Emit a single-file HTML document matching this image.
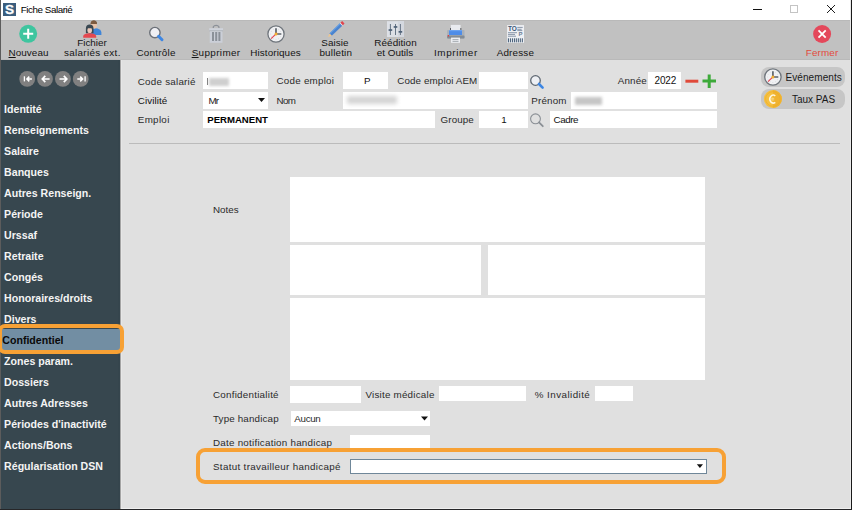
<!DOCTYPE html>
<html><head><meta charset="utf-8"><style>
html,body{margin:0;padding:0;width:852px;height:510px;overflow:hidden;background:#e0e0e0;}
body{position:relative;font-family:"Liberation Sans", sans-serif;}
body>div,body>svg{position:absolute;box-sizing:content-box;}
</style></head><body>
<div style="left:0px;top:0px;width:852px;height:510px;background:#e0e0e0;"></div>
<div style="left:0px;top:0px;width:852px;height:20px;background:#ffffff;"></div>
<div style="left:0px;top:20px;width:852px;height:40px;background:#c1c1c1;"></div>
<div style="left:0px;top:20px;width:852px;height:1px;background:#b9b9b9;"></div>
<div style="left:0px;top:59px;width:852px;height:1px;background:#b9b9b9;"></div>
<div style="left:0px;top:60px;width:120px;height:450px;background:#37474f;"></div>
<div style="left:118px;top:60px;width:2px;height:450px;background:#35454d;"></div>
<div style="left:120px;top:60px;width:1px;height:450px;background:#a4a4a4;"></div>
<div style="left:121px;top:60px;width:1px;height:450px;background:#e7e7e7;"></div>
<div style="left:0px;top:0px;width:1px;height:510px;background:#5c5c5c;"></div>
<div style="left:850px;top:0px;width:1px;height:510px;background:#e9e9e9;"></div>
<div style="left:851px;top:0px;width:1px;height:510px;background:#1a1a1a;"></div>
<div style="left:121px;top:508px;width:730px;height:1px;background:#efefef;"></div>
<div style="left:0px;top:509px;width:852px;height:1px;background:#262628;"></div>
<div style="left:3px;top:3px;width:13px;height:13px;background:#3b5e7e;"></div>
<div style="left:-140.40px;width:300px;text-align:center;top:1.57px;font-size:13.6px;line-height:15.64px;color:#fff;font-weight:bold;white-space:pre;-webkit-text-stroke:0.3px #fff;">S</div>
<div style="left:20.70px;top:3.57px;font-size:9.8px;line-height:11.27px;color:#000;font-weight:normal;white-space:pre;letter-spacing:-0.432px;">Fiche Salarié</div>
<div style="left:753px;top:9px;width:9px;height:1px;background:#111;"></div>
<div style="left:790px;top:5px;width:6px;height:6px;border:1px solid #c4c4c4;"></div>
<div style="left:-121.46px;width:300px;text-align:center;top:47.28px;font-size:9.9px;line-height:11.38px;color:#141414;font-weight:normal;white-space:pre;letter-spacing:0.075px;"><u>N</u>ouveau</div>
<div style="left:-58.02px;width:300px;text-align:center;top:37.18px;font-size:9.9px;line-height:11.38px;color:#141414;font-weight:normal;white-space:pre;letter-spacing:-0.033px;">Fichier</div>
<div style="left:-57.65px;width:300px;text-align:center;top:47.28px;font-size:9.9px;line-height:11.38px;color:#141414;font-weight:normal;white-space:pre;letter-spacing:0.307px;">salariés ext.</div>
<div style="left:6.12px;width:300px;text-align:center;top:47.28px;font-size:9.9px;line-height:11.38px;color:#141414;font-weight:normal;white-space:pre;letter-spacing:0.240px;">Contrôle</div>
<div style="left:66.08px;width:300px;text-align:center;top:47.28px;font-size:9.9px;line-height:11.38px;color:#141414;font-weight:normal;white-space:pre;letter-spacing:0.364px;"><u>S</u>upprimer</div>
<div style="left:125.55px;width:300px;text-align:center;top:47.28px;font-size:9.9px;line-height:11.38px;color:#141414;font-weight:normal;white-space:pre;letter-spacing:0.100px;">Historiques</div>
<div style="left:185.03px;width:300px;text-align:center;top:37.18px;font-size:9.9px;line-height:11.38px;color:#141414;font-weight:normal;white-space:pre;letter-spacing:0.065px;">Saisie</div>
<div style="left:185.79px;width:300px;text-align:center;top:47.28px;font-size:9.9px;line-height:11.38px;color:#141414;font-weight:normal;white-space:pre;letter-spacing:0.174px;">bulletin</div>
<div style="left:245.54px;width:300px;text-align:center;top:37.18px;font-size:9.9px;line-height:11.38px;color:#141414;font-weight:normal;white-space:pre;letter-spacing:0.072px;">Réédition</div>
<div style="left:245.02px;width:300px;text-align:center;top:47.28px;font-size:9.9px;line-height:11.38px;color:#141414;font-weight:normal;white-space:pre;letter-spacing:0.033px;">et Outils</div>
<div style="left:305.90px;width:300px;text-align:center;top:47.28px;font-size:9.9px;line-height:11.38px;color:#141414;font-weight:normal;white-space:pre;letter-spacing:0.606px;">Imprimer</div>
<div style="left:365.38px;width:300px;text-align:center;top:47.28px;font-size:9.9px;line-height:11.38px;color:#141414;font-weight:normal;white-space:pre;letter-spacing:0.161px;">Adresse</div>
<div style="left:672.06px;width:300px;text-align:center;top:47.28px;font-size:9.9px;line-height:11.38px;color:#e14b3d;font-weight:normal;white-space:pre;letter-spacing:0.124px;">Fermer</div>
<div style="left:1px;top:329px;width:119px;height:20.5px;background:#728ea3;"></div>
<div style="left:4.10px;top:102.83px;font-size:10.6px;line-height:12.19px;color:#f4f4f4;font-weight:bold;white-space:pre;">Identité</div>
<div style="left:4.10px;top:123.83px;font-size:10.6px;line-height:12.19px;color:#f4f4f4;font-weight:bold;white-space:pre;">Renseignements</div>
<div style="left:4.10px;top:144.83px;font-size:10.6px;line-height:12.19px;color:#f4f4f4;font-weight:bold;white-space:pre;">Salaire</div>
<div style="left:4.10px;top:165.83px;font-size:10.6px;line-height:12.19px;color:#f4f4f4;font-weight:bold;white-space:pre;">Banques</div>
<div style="left:4.10px;top:186.83px;font-size:10.6px;line-height:12.19px;color:#f4f4f4;font-weight:bold;white-space:pre;">Autres Renseign.</div>
<div style="left:4.10px;top:207.83px;font-size:10.6px;line-height:12.19px;color:#f4f4f4;font-weight:bold;white-space:pre;">Période</div>
<div style="left:4.10px;top:228.83px;font-size:10.6px;line-height:12.19px;color:#f4f4f4;font-weight:bold;white-space:pre;">Urssaf</div>
<div style="left:4.10px;top:249.83px;font-size:10.6px;line-height:12.19px;color:#f4f4f4;font-weight:bold;white-space:pre;">Retraite</div>
<div style="left:4.10px;top:270.83px;font-size:10.6px;line-height:12.19px;color:#f4f4f4;font-weight:bold;white-space:pre;">Congés</div>
<div style="left:4.10px;top:291.83px;font-size:10.6px;line-height:12.19px;color:#f4f4f4;font-weight:bold;white-space:pre;">Honoraires/droits</div>
<div style="left:4.10px;top:312.83px;font-size:10.6px;line-height:12.19px;color:#f4f4f4;font-weight:bold;white-space:pre;">Divers</div>
<div style="left:2.30px;top:333.83px;font-size:10.6px;line-height:12.19px;color:#0a0a0a;font-weight:bold;white-space:pre;">Confidentiel</div>
<div style="left:4.10px;top:354.83px;font-size:10.6px;line-height:12.19px;color:#f4f4f4;font-weight:bold;white-space:pre;">Zones param.</div>
<div style="left:4.10px;top:375.83px;font-size:10.6px;line-height:12.19px;color:#f4f4f4;font-weight:bold;white-space:pre;">Dossiers</div>
<div style="left:4.10px;top:396.83px;font-size:10.6px;line-height:12.19px;color:#f4f4f4;font-weight:bold;white-space:pre;">Autres Adresses</div>
<div style="left:4.10px;top:417.83px;font-size:10.6px;line-height:12.19px;color:#f4f4f4;font-weight:bold;white-space:pre;">Périodes d'inactivité</div>
<div style="left:4.10px;top:438.83px;font-size:10.6px;line-height:12.19px;color:#f4f4f4;font-weight:bold;white-space:pre;">Actions/Bons</div>
<div style="left:4.10px;top:459.83px;font-size:10.6px;line-height:12.19px;color:#f4f4f4;font-weight:bold;white-space:pre;">Régularisation DSN</div>
<div style="left:-2px;top:324px;width:118px;height:21.5px;border:4px solid #f7a135;border-radius:7px;"></div>
<div style="left:137.80px;top:75.77px;font-size:9.8px;line-height:11.27px;color:#2a2a2a;font-weight:normal;white-space:pre;letter-spacing:0.243px;">Code salarié</div>
<div style="left:137.80px;top:94.97px;font-size:9.8px;line-height:11.27px;color:#111;font-weight:normal;white-space:pre;letter-spacing:0.091px;">Civilité</div>
<div style="left:137.80px;top:114.37px;font-size:9.8px;line-height:11.27px;color:#2a2a2a;font-weight:normal;white-space:pre;letter-spacing:0.312px;">Emploi</div>
<div style="left:276.50px;top:75.47px;font-size:9.8px;line-height:11.27px;color:#2a2a2a;font-weight:normal;white-space:pre;letter-spacing:0.247px;">Code emploi</div>
<div style="left:276.50px;top:94.97px;font-size:9.8px;line-height:11.27px;color:#2a2a2a;font-weight:normal;white-space:pre;letter-spacing:-0.589px;">Nom</div>
<div style="left:397.30px;top:75.47px;font-size:9.8px;line-height:11.27px;color:#2a2a2a;font-weight:normal;white-space:pre;letter-spacing:0.111px;">Code emploi AEM</div>
<div style="left:440.60px;top:113.97px;font-size:9.8px;line-height:11.27px;color:#2a2a2a;font-weight:normal;white-space:pre;letter-spacing:0.083px;">Groupe</div>
<div style="left:617.70px;top:75.47px;font-size:9.8px;line-height:11.27px;color:#2a2a2a;font-weight:normal;white-space:pre;letter-spacing:0.194px;">Année</div>
<div style="left:531.30px;top:94.97px;font-size:9.8px;line-height:11.27px;color:#2a2a2a;font-weight:normal;white-space:pre;letter-spacing:0.180px;">Prénom</div>
<div style="left:203px;top:72px;width:65px;height:17px;background:#ffffff;"></div>
<div style="left:343px;top:72px;width:45px;height:17px;background:#ffffff;"></div>
<div style="left:479px;top:72px;width:49px;height:17px;background:#ffffff;"></div>
<div style="left:648px;top:72px;width:33px;height:17px;background:#ffffff;"></div>
<div style="left:203px;top:92px;width:65px;height:17px;background:#ffffff;"></div>
<div style="left:343px;top:92px;width:185px;height:17px;background:#ffffff;"></div>
<div style="left:571px;top:92px;width:146px;height:17px;background:#ffffff;"></div>
<div style="left:203px;top:111px;width:232px;height:17px;background:#ffffff;"></div>
<div style="left:479px;top:111px;width:49px;height:17px;background:#ffffff;"></div>
<div style="left:550px;top:111px;width:167px;height:17px;background:#ffffff;"></div>
<div style="left:206.5px;top:78px;width:1.5px;height:7px;background:#777;filter:blur(0.5px)"></div>
<div style="left:209px;top:77.5px;width:20px;height:8px;background:#cfcfcf;filter:blur(1.8px)"></div>
<div style="left:347px;top:96px;width:50px;height:8px;background:#d4d4d4;filter:blur(2px)"></div>
<div style="left:575px;top:96.5px;width:27px;height:8px;background:#c6c6c6;filter:blur(1.8px)"></div>
<div style="left:217.40px;width:300px;text-align:center;top:75.47px;font-size:9.8px;line-height:11.27px;color:#111;font-weight:normal;white-space:pre;">P</div>
<div style="left:515.34px;width:300px;text-align:center;top:75.28px;font-size:10px;line-height:11.5px;color:#111;font-weight:normal;white-space:pre;letter-spacing:-0.117px;">2022</div>
<div style="left:208.50px;top:94.97px;font-size:9.8px;line-height:11.27px;color:#222;font-weight:normal;white-space:pre;letter-spacing:-0.917px;">Mr</div>
<div style="left:207.30px;top:114.15px;font-size:9.6px;line-height:11.04px;color:#000;font-weight:bold;white-space:pre;letter-spacing:-0.014px;">PERMANENT</div>
<div style="left:354.00px;width:300px;text-align:center;top:113.97px;font-size:9.8px;line-height:11.27px;color:#111;font-weight:normal;white-space:pre;">1</div>
<div style="left:553.50px;top:113.57px;font-size:9.8px;line-height:11.27px;color:#111;font-weight:normal;white-space:pre;letter-spacing:-0.426px;">Cadre</div>
<div style="left:761px;top:67px;width:84px;height:20px;background:#c6c6c6;border-radius:8px;"></div>
<div style="left:761px;top:89px;width:84px;height:20px;background:#c6c6c6;border-radius:8px;"></div>
<div style="left:785.50px;top:71.78px;font-size:10px;line-height:11.5px;color:#1a1a1a;font-weight:normal;white-space:pre;letter-spacing:0.078px;">Evénements</div>
<div style="left:791.90px;top:93.78px;font-size:10px;line-height:11.5px;color:#1a1a1a;font-weight:normal;white-space:pre;letter-spacing:0.007px;">Taux PAS</div>
<div style="left:129px;top:143px;width:711px;height:1px;background:#bbbbbb;"></div>
<div style="left:213.00px;top:203.97px;font-size:9.8px;line-height:11.27px;color:#2a2a2a;font-weight:normal;white-space:pre;letter-spacing:0.005px;">Notes</div>
<div style="left:290px;top:177px;width:415px;height:65px;background:#fff;"></div>
<div style="left:290px;top:245px;width:191px;height:50px;background:#fff;"></div>
<div style="left:488px;top:245px;width:217px;height:50px;background:#fff;"></div>
<div style="left:290px;top:298px;width:415px;height:82px;background:#fff;"></div>
<div style="left:213.00px;top:388.97px;font-size:9.8px;line-height:11.27px;color:#2a2a2a;font-weight:normal;white-space:pre;letter-spacing:0.248px;">Confidentialité</div>
<div style="left:290px;top:386px;width:71px;height:17px;background:#fff;"></div>
<div style="left:365.40px;top:388.97px;font-size:9.8px;line-height:11.27px;color:#2a2a2a;font-weight:normal;white-space:pre;letter-spacing:0.235px;">Visite médicale</div>
<div style="left:439px;top:386px;width:87px;height:15px;background:#fff;"></div>
<div style="left:534.80px;top:388.97px;font-size:9.8px;line-height:11.27px;color:#2a2a2a;font-weight:normal;white-space:pre;letter-spacing:0.443px;">% Invalidité</div>
<div style="left:595px;top:386px;width:38px;height:15px;background:#fff;"></div>
<div style="left:213.00px;top:413.37px;font-size:9.8px;line-height:11.27px;color:#2a2a2a;font-weight:normal;white-space:pre;letter-spacing:0.154px;">Type handicap</div>
<div style="left:291px;top:411px;width:139px;height:15px;background:#fff;"></div>
<div style="left:294.30px;top:413.37px;font-size:9.8px;line-height:11.27px;color:#2a2a2a;font-weight:normal;white-space:pre;letter-spacing:-0.321px;">Aucun</div>
<div style="left:213.00px;top:436.67px;font-size:9.8px;line-height:11.27px;color:#2a2a2a;font-weight:normal;white-space:pre;letter-spacing:0.248px;">Date notification handicap</div>
<div style="left:350px;top:435px;width:80px;height:17px;background:#fff;"></div>
<div style="left:196px;top:448px;width:522px;height:28px;border:4px solid #f7a135;border-radius:9px;"></div>
<div style="left:213.00px;top:460.97px;font-size:9.8px;line-height:11.27px;color:#2a2a2a;font-weight:normal;white-space:pre;letter-spacing:0.323px;">Statut travailleur handicapé</div>
<div style="left:350px;top:459px;width:355px;height:13px;background:#fff;border:1px solid #6f8799;"></div>
<svg style="left:0;top:0" width="852" height="510" viewBox="0 0 852 510"><path d="M827 5L835 13M835 5L827 13" stroke="#111" stroke-width="0.95"/><circle cx="28.2" cy="33.8" r="9" fill="#3ec59f"/><path d="M23.2 33.8H33.2M28.2 28.8V38.8" stroke="#fff" stroke-width="2"/><path d="M89 35v-2.5a6.2 4.2 0 0 1 12.4 0v2.5z" fill="#3f85d8"/><ellipse cx="93.8" cy="25" rx="3.1" ry="3.8" fill="#e8c2a8"/><path d="M90.6 24.6a3.2 4 0 0 1 6.4 0l-0.5-1.2q-2.7-1.6-5.4 0z" fill="#7d5b40"/><path d="M90.6 24a3.2 3.6 0 0 1 6.4 0" fill="#7d5b40"/><path d="M85.9 33.3v-4.8a3.8 4 0 0 1 7.6 0v4.8z" fill="#3a4852"/><ellipse cx="89.7" cy="30.2" rx="2.3" ry="3" fill="#ecc8b8"/><path d="M87 28.3a2.8 2.6 0 0 1 5.4 0z" fill="#3a4852"/><path d="M83.2 37.8v-1.6a6.5 3 0 0 1 13 0v1.6z" fill="#e5484f"/><circle cx="154.9" cy="32.6" r="5.2" fill="#efeff3" stroke="#6b7078" stroke-width="1.4"/><path d="M158.6 36.3L162 39.7" stroke="#3d86e3" stroke-width="3" stroke-linecap="round"/><path d="M213.3 28v-1.2a3 2.2 0 0 1 5.6 0V28" fill="none" stroke="#8b9098" stroke-width="1.2"/><rect x="209.2" y="28.2" width="13.8" height="2.6" fill="#cfd3db"/><rect x="209.2" y="30.6" width="13.8" height="0.7" fill="#9aa0a8"/><rect x="209.7" y="31.2" width="12.8" height="11.6" fill="#cbcfd8"/><rect x="212" y="32" width="2" height="9" fill="#8b9199"/><rect x="215.2" y="32" width="2" height="9" fill="#8b9199"/><rect x="218.4" y="32" width="2" height="9" fill="#8b9199"/><circle cx="276" cy="34" r="8.100000000000001" fill="#f0f1f3" stroke="#6f757c" stroke-width="1.3"/><circle cx="281.46" cy="34.00" r="0.45" fill="#c9ccd2"/><circle cx="280.73" cy="36.73" r="0.45" fill="#c9ccd2"/><circle cx="278.73" cy="38.73" r="0.45" fill="#c9ccd2"/><circle cx="276.00" cy="39.46" r="0.45" fill="#c9ccd2"/><circle cx="273.27" cy="38.73" r="0.45" fill="#c9ccd2"/><circle cx="271.27" cy="36.73" r="0.45" fill="#c9ccd2"/><circle cx="270.54" cy="34.00" r="0.45" fill="#c9ccd2"/><circle cx="271.27" cy="31.27" r="0.45" fill="#c9ccd2"/><circle cx="273.27" cy="29.27" r="0.45" fill="#c9ccd2"/><circle cx="276.00" cy="28.54" r="0.45" fill="#c9ccd2"/><circle cx="278.73" cy="29.27" r="0.45" fill="#c9ccd2"/><circle cx="280.73" cy="31.27" r="0.45" fill="#c9ccd2"/><path d="M276 34V28.192" stroke="#656b72" stroke-width="1.8"/><path d="M276 34H281.28" stroke="#656b72" stroke-width="1.6"/><path d="M277.056 32.944L271.16 38.576" stroke="#e3404e" stroke-width="1.1"/><circle cx="276" cy="34" r="1.5" fill="#f2b233"/><g transform="translate(336,29.4) rotate(-44)"><rect x="-7.5" y="-1.7" width="14.6" height="3.4" fill="#4b84cf"/><rect x="-7.5" y="-1.7" width="14.6" height="1" fill="#65a0e6"/><path d="M-7.5 -1.7L-11 0L-7.5 1.7z" fill="#f0c68c"/><rect x="7.1" y="-1.7" width="0.8" height="3.4" fill="#eeeeee"/><rect x="7.9" y="-1.7" width="2.3" height="3.4" fill="#e2444e"/></g><rect x="387" y="21.2" width="17" height="15.8" fill="#dde0e6"/><rect x="398" y="21.2" width="6" height="15.8" fill="#d4d8df"/><path d="M390.4 24v11M395.5 24v11M400.4 24v11" stroke="#5a6a7b" stroke-width="0.9"/><rect x="388.6" y="29.2" width="3.6" height="1.7" fill="#4e6177"/><rect x="393.7" y="26.1" width="3.6" height="1.7" fill="#4e6177"/><rect x="398.6" y="31" width="3.6" height="1.7" fill="#4e6177"/><rect x="450.8" y="24.9" width="9.8" height="5.5" fill="#e9ebef"/><rect x="450" y="28" width="0.9" height="2" fill="#4a5058"/><rect x="460.4" y="28" width="0.9" height="2" fill="#4a5058"/><rect x="447.1" y="30" width="17.4" height="8.6" rx="1" fill="#a9b0b8"/><rect x="447.1" y="35.6" width="17.4" height="3" rx="0.8" fill="#848c94"/><rect x="449" y="30" width="13" height="5" fill="#4d8ce8"/><rect x="449" y="30" width="13" height="1.2" fill="#6aa2f0"/><circle cx="448.4" cy="35.8" r="0.8" fill="#e8303a"/><rect x="451" y="37.6" width="9" height="5.2" fill="#eceef2"/><path d="M452.5 39.6h6M452.5 41.4h6" stroke="#8a9098" stroke-width="0.7"/><rect x="507.1" y="25.1" width="16.9" height="17.7" fill="#eef0f4"/><text x="508" y="31.4" font-family="Liberation Sans" font-weight="bold" font-size="6.5" fill="#3c5674">TO</text><path d="M517.3 27.4h5.4M517.3 29.3h4.3M517.3 30.6h5M508 32.7h9M508 34.4h7M508 36.2h8" stroke="#5d7088" stroke-width="0.7"/><text x="518.5" y="36.4" font-family="Liberation Sans" font-weight="bold" font-size="6" fill="#6a7d94">P</text><path d="M508.4 38.3v4M510.4 38.3v4M512.4 38.3v4M514.4 38.3v4M516.3 38.3v4M518.3 38.3v4M520.3 38.3v4M522.3 38.3v4" stroke="#3d5670" stroke-width="1"/><circle cx="822.1" cy="34" r="9" fill="#e4485b"/><path d="M818.5 30.4L825.7 37.6M825.7 30.4L818.5 37.6" stroke="#fff" stroke-width="1.8"/><circle cx="27.2" cy="78.9" r="7.9" fill="#808080"/><circle cx="45" cy="78.9" r="7.9" fill="#808080"/><circle cx="62.9" cy="78.9" r="7.9" fill="#808080"/><circle cx="80.7" cy="78.9" r="7.9" fill="#808080"/><path d="M24.4 76.3v5.1" stroke="#fff" stroke-width="1.3"/><path d="M31.9 79H27M29.3 76.6L26.9 79L29.3 81.4" stroke="#fff" stroke-width="1.5" fill="none"/><path d="M49.6 79H42.5M45.3 75.9L42.3 79L45.3 82.1" stroke="#fff" stroke-width="1.7" fill="none"/><path d="M59.5 79H66.6M63.8 75.9L66.8 79L63.8 82.1" stroke="#fff" stroke-width="1.7" fill="none"/><path d="M85.1 76.3v5.1" stroke="#fff" stroke-width="1.3"/><path d="M77.3 79H82.4M80.2 76.6L82.6 79L80.2 81.4" stroke="#fff" stroke-width="1.5" fill="none"/><path d="M258 98h7l-3.5 4z" fill="#111"/><circle cx="535.5" cy="80.5" r="4.8" fill="#eef0f4" stroke="#5f6872" stroke-width="1.3"/><path d="M539 84L542.6 87.6" stroke="#3d86e3" stroke-width="2.6" stroke-linecap="round"/><circle cx="535.5" cy="118.8" r="4.9" fill="none" stroke="#8a8f95" stroke-width="1.1"/><path d="M539 122.4L542.8 126.2" stroke="#8a8f95" stroke-width="1.8" stroke-linecap="round"/><path d="M685.4 81.2H698.3" stroke="#e04a3a" stroke-width="3"/><path d="M702.5 81H716M709.2 74.6V88" stroke="#3daa3a" stroke-width="3"/><circle cx="772.9" cy="77" r="8.200000000000001" fill="#f0f1f3" stroke="#6f757c" stroke-width="1.3"/><circle cx="778.42" cy="77.00" r="0.45" fill="#c9ccd2"/><circle cx="777.68" cy="79.76" r="0.45" fill="#c9ccd2"/><circle cx="775.66" cy="81.78" r="0.45" fill="#c9ccd2"/><circle cx="772.90" cy="82.52" r="0.45" fill="#c9ccd2"/><circle cx="770.14" cy="81.78" r="0.45" fill="#c9ccd2"/><circle cx="768.12" cy="79.76" r="0.45" fill="#c9ccd2"/><circle cx="767.38" cy="77.00" r="0.45" fill="#c9ccd2"/><circle cx="768.12" cy="74.24" r="0.45" fill="#c9ccd2"/><circle cx="770.14" cy="72.22" r="0.45" fill="#c9ccd2"/><circle cx="772.90" cy="71.48" r="0.45" fill="#c9ccd2"/><circle cx="775.66" cy="72.22" r="0.45" fill="#c9ccd2"/><circle cx="777.68" cy="74.24" r="0.45" fill="#c9ccd2"/><path d="M772.9 77V71.126" stroke="#656b72" stroke-width="1.8"/><path d="M772.9 77H778.24" stroke="#656b72" stroke-width="1.6"/><path d="M773.968 75.932L768.005 81.628" stroke="#e3404e" stroke-width="1.1"/><circle cx="772.9" cy="77" r="1.5" fill="#f2b233"/><circle cx="772.9" cy="99" r="9" fill="#f6c03f"/><path d="M772.9 90a9 9 0 0 1 0 18z" fill="#f0b330"/><circle cx="772.9" cy="99" r="7.3" fill="none" stroke="#eaa92a" stroke-width="0.6"/><path d="M775.3 95.9a3.5 3.9 0 1 0 0 6.4" fill="none" stroke="#fdf6e2" stroke-width="1.5"/><path d="M771.2 98.3h3M771.2 99.9h3" stroke="#f8dfa0" stroke-width="0.8"/><path d="M421 416.5h7l-3.5 4z" fill="#111"/><path d="M696.8 464.3h6.2l-3.1 3.8z" fill="#111"/></svg>
</body></html>
